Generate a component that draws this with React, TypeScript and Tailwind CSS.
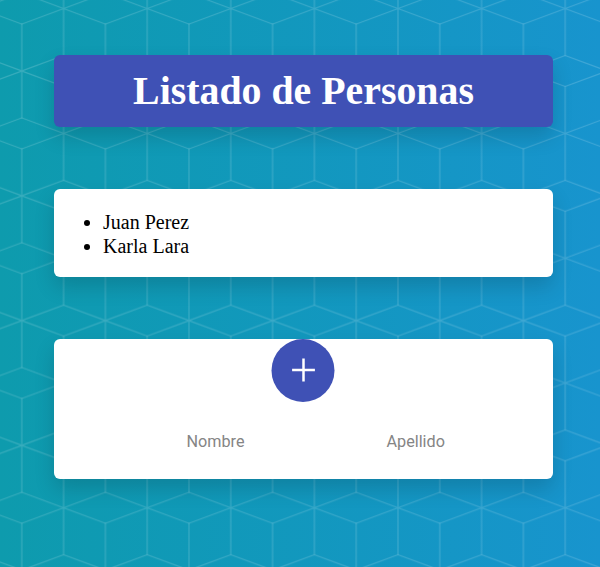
export default function App() {
  return (
    <div className="relative min-h-[567px] overflow-hidden bg-gradient-to-r from-[#0e9bad] to-[#1894ce]">
      <svg className="absolute inset-0" width="600" height="567" aria-hidden="true">
        <defs>
          <pattern id="cubes" x="21.8" y="71" width="83.6" height="124.8" patternUnits="userSpaceOnUse">
            <g fill="none" stroke="#ffffff" strokeOpacity="0.17" strokeWidth="1.2">
              <path d="M0 0V47.5M0 0L41.8 -15.5M0 0L41.8 15.5" />
              <path d="M83.6 0V47.5M83.6 0L41.8 15.5" />
              <path d="M0 124.8V77.3M83.6 124.8V77.3M0 124.8L41.8 109.3M83.6 124.8L41.8 109.3" />
              <path d="M41.8 15.5V109.3M41.8 62.4L0 46.9M41.8 62.4L0 77.9M41.8 62.4L83.6 46.9M41.8 62.4L83.6 77.9" />
            </g>
          </pattern>
        </defs>
        <rect width="600" height="567" fill="url(#cubes)" />
      </svg>
      <div className="relative ml-[54px] flex w-[499px] flex-col pt-[55px]">
        <header className="flex h-[72px] items-center justify-center rounded-[6px] bg-[#3f51b5] shadow-[0_10px_20px_rgba(0,0,0,0.15)]">
          <h1 className="font-['Liberation_Serif',serif] text-[39.85px] font-bold leading-none text-white">Listado de Personas</h1>
        </header>
        <section className="mt-[62px] h-[87.5px] rounded-[6px] bg-white pl-[49px] pt-[21px] shadow-[0_10px_20px_rgba(0,0,0,0.15)]">
          <ul className="list-disc font-['Liberation_Serif',serif] text-[20px] leading-[24px] text-black">
            <li>Juan Perez</li>
            <li>Karla Lara</li>
          </ul>
        </section>
        <section className="mt-[62.5px] flex h-[140px] flex-col items-center rounded-[6px] bg-white shadow-[0_10px_20px_rgba(0,0,0,0.15)]">
          <button className="flex h-[62.5px] w-[62.5px] -translate-x-[0.5px] items-center justify-center rounded-full bg-[#3f51b5] text-white">
            <svg width="24" height="24" viewBox="0 0 24 24" fill="none" stroke="currentColor" strokeWidth="2.5">
              <path d="M12 0.6V23.4M0.6 12H23.4" />
            </svg>
          </button>
          <div className="mt-[29.5px] flex w-[400px] font-['Roboto',sans-serif] text-[16.2px] leading-[22px] text-[#858585]">
            <span className="w-[200px] pl-[83px]">Nombre</span>
            <span className="w-[200px] pl-[83px]">Apellido</span>
          </div>
        </section>
      </div>
    </div>
  );
}
